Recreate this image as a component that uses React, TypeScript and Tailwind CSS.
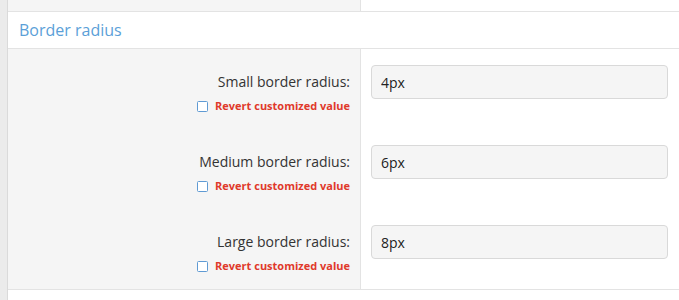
import { useState } from 'react'

type Row = { label: string; value: string }

const rows: Row[] = [
  { label: 'Small border radius:', value: '4px' },
  { label: 'Medium border radius:', value: '6px' },
  { label: 'Large border radius:', value: '8px' },
]

const font = { fontFamily: '"Open Sans", "Noto Sans", "Liberation Sans", sans-serif' }

function CheckBox() {
  return (
    <svg width="11" height="11" viewBox="0 0 11 11" className="shrink-0">
      <rect x="0.5" y="0.5" width="10" height="10" rx="1" fill="#fff" stroke="#5f9ad3" strokeWidth="1" />
    </svg>
  )
}

function OptionRow({ row }: { row: Row }) {
  const [value, setValue] = useState(row.value)
  return (
    <div className="flex h-[80px]">
      <div className="w-[353px] shrink-0 bg-[#f5f5f5] border-r border-[#e3e3e3] pt-[16px] pr-[10px] text-right">
        <div className="h-[34px] leading-[34px] text-[14px] text-[#333]">{row.label}</div>
        <div className="flex items-center justify-end gap-[7px] leading-[14px]">
          <CheckBox />
          <span className="text-[11px] font-bold text-[#e0392b]">Revert customized value</span>
        </div>
      </div>
      <div className="flex-1 pt-[16px] pl-[10px] pr-[11px]">
        <input
          value={value}
          onChange={e => setValue(e.target.value)}
          className="w-full h-[34px] rounded-[4px] border border-[#d9d9d9] bg-[#f5f5f5] px-[9px] text-[14px] text-[#222] outline-none"
          style={font}
        />
      </div>
    </div>
  )
}

export default function App() {
  return (
    <div className="flex h-[300px] w-full bg-white overflow-hidden" style={font}>
      <div className="w-[8px] shrink-0 bg-[#ebebeb] border-r border-[#dadada]" />
      <div className="flex-1 flex flex-col">
        <div className="flex h-[12px] border-b border-[#e3e3e3]">
          <div className="w-[353px] shrink-0 bg-[#f5f5f5] border-r border-[#e3e3e3]" />
          <div className="flex-1" />
        </div>
        <div className="h-[37px] flex items-center px-[11px] border-b border-[#e3e3e3]">
          <span className="text-[16px] text-[#5b9fd8]">Border radius</span>
        </div>
        <div className="border-b border-[#e3e3e3]">
          {rows.map(r => (
            <OptionRow key={r.label} row={r} />
          ))}
        </div>
      </div>
    </div>
  )
}
